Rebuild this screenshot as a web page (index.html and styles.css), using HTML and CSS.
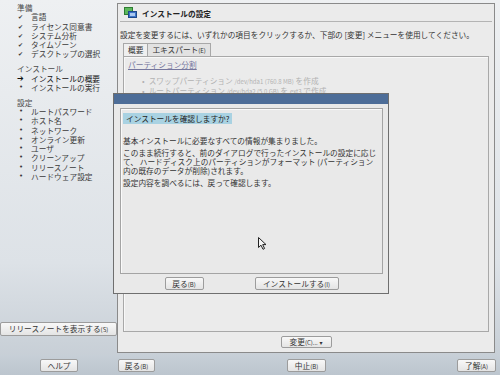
FILE: index.html
```html
<!DOCTYPE html>
<html lang="ja">

<head>
    <meta charset="UTF-8">
    <meta name="viewport" content="width=device-width, initial-scale=1.0">
    <title>インストールの設定</title>

    <link rel="stylesheet" href="styles.css">
</head>

<body>
    <div class="screen">
        <div class="top">
            <!-- 左側：インストール手順 -->
            <aside class="side">
                <ul class="steps">
                    <li class="head">準備</li>
                    <li class="done">言語</li>
                    <li class="done">ライセンス同意書</li>
                    <li class="done">システム分析</li>
                    <li class="done">タイムゾーン</li>
                    <li class="done">デスクトップの選択</li>
                    <li class="head gap">インストール</li>
                    <li class="cur">インストールの概要</li>
                    <li class="todo">インストールの実行</li>
                    <li class="head gap">設定</li>
                    <li class="todo">ルートパスワード</li>
                    <li class="todo">ホスト名</li>
                    <li class="todo">ネットワーク</li>
                    <li class="todo">オンライン更新</li>
                    <li class="todo">ユーザ</li>
                    <li class="todo">クリーンアップ</li>
                    <li class="todo">リリースノート</li>
                    <li class="todo">ハードウェア設定</li>
                </ul>
                <button class="btn relnotes">リリースノートを表示する<small>(S)</small></button>
            </aside>

            <!-- 右側：設定パネル -->
            <section class="panel">
                <div class="panel-title">
                    <svg class="title-icon" width="13" height="12" viewBox="0 0 13 12">
                        <rect x="0.5" y="0.5" width="8" height="7" fill="#5cb85c" stroke="#2e7d32"/>
                        <rect x="4.5" y="4.5" width="8" height="6" fill="#3d74c9" stroke="#1f4a8a"/>
                        <rect x="6" y="6" width="5" height="3" fill="#a9c8f0"/>
                    </svg>
                    <span>インストールの設定</span>
                </div>
                <p class="hint">設定を変更するには、いずれかの項目をクリックするか、下部の [変更] メニューを使用してください。</p>
                <div class="tabs">
                    <span class="tab on">概要</span>
                    <span class="tab">エキスパート<small>(E)</small></span>
                </div>
                <div class="page">
                    <a class="link">パーティション分割</a>
                    <ul class="items">
                        <li>スワップパーティション <small>/dev/hda1 (760.8 MB)</small> を作成</li>
                        <li>ルートパーティション <small>/dev/hda2 (5.0 GB)</small> を <small>ext3</small> で作成</li>
                        <li>ファイルシステム <small>reiser</small> を使用</li>
                    </ul>
                </div>
                <div class="panel-foot">
                    <button class="btn">変更<small>(C)...</small> <span class="arrow">▾</span></button>
                </div>
            </section>
        </div>

        <!-- 下部ボタン -->
        <div class="bottom">
            <button class="btn help">ヘルプ</button>
            <button class="btn back">戻る<small>(B)</small></button>
            <button class="btn abort">中止<small>(B)</small></button>
            <button class="btn ok">了解<small>(A)</small></button>
        </div>

        <!-- 確認ダイアログ（パネルの上に重なる） -->
        <div class="dialog">
            <div class="dialog-bar"></div>
            <div class="dialog-body">
                <div class="frame">
                    <span class="ask">インストールを確認しますか?</span>
                    <p>基本インストールに必要なすべての情報が集まりました。</p>
                    <p>このまま続行すると、前のダイアログで行ったインストールの設定に応じ<br>て、 ハードディスク上のパーティションがフォーマット (パーティション<br>内の既存のデータが削除)されます。</p>
                    <p>設定内容を調べるには、戻って確認します。</p>
                </div>
                <div class="dialog-btns">
                    <button class="btn d-back">戻る<small>(B)</small></button>
                    <button class="btn d-inst">インストールする<small>(I)</small></button>
                </div>
            </div>
        </div>

        <svg class="cursor" width="9" height="13" viewBox="0 0 9 13">
            <path d="M0.5 0.5 L0.5 10.5 L3 8.2 L5 12.3 L6.6 11.5 L4.7 7.6 L8 7.6 Z" fill="#f4f4f4" stroke="#222" stroke-width="1"/>
        </svg>
    </div>
</body>

</html>
```

FILE: styles.css
```css
* {
    box-sizing: border-box;
}

body,
ul,
li,
p {
    margin: 0;
    padding: 0;
    list-style: none;
}

body {
    width: 500px;
    height: 375px;
    overflow: hidden;
    font-family: "Noto Sans CJK JP", "Noto Sans", sans-serif;
    font-size: 7.7px;
    color: #333;
}

small {
    font-size: 6px;
}

.screen {
    position: relative;    /* ダイアログとカーソルの基準 */
    width: 500px;
    height: 375px;
    display: flex;
    flex-direction: column;
    background: linear-gradient(to bottom, #eef0f2, #dde2e7 70%, #c3cbd3);
}

.top {
    display: flex;
    height: 355px;
}

/* ---------- 左側の手順リスト ---------- */
.side {
    width: 117px;
    display: flex;
    flex-direction: column;
    justify-content: space-between;
    padding: 3px 0 19px;
}

.steps li {
    display: flex;
    line-height: 9.3px;
    padding-left: 31px;
    position: relative;
    color: #3a3a3a;
}

.steps .head {
    padding-left: 17px;
    color: #4a4a4a;
}

.steps .gap {
    margin-top: 5.5px;
}

.steps .done::before,
.steps .cur::before,
.steps .todo::before {
    position: absolute;
    left: 18px;
    font-family: "DejaVu Sans", sans-serif;
}

.steps .done::before {
    content: "\2714";
    font-size: 6px;
}

.steps .cur {
    color: #111;
}

.steps .cur::before {
    content: "\2794";
    font-size: 8px;
    left: 17px;
}

.steps .todo::before {
    content: "\2022";
    font-size: 7px;
    left: 19px;
}

/* ---------- ボタン共通 ---------- */
.btn {
    font: inherit;
    color: #333;
    height: 13px;
    padding: 0 4px;
    line-height: 11px;
    border: 1px solid #9c9c9c;
    border-radius: 2px;
    background: linear-gradient(to bottom, #f8f8f8, #e4e4e4);
}

.relnotes {
    width: 117px;
    height: 14px;
}

/* ---------- 右側のパネル ---------- */
.panel {
    width: 378px;
    height: 350px;
    margin-top: 3px;
    display: flex;
    flex-direction: column;
    border: 1px solid #8a8a8a;
    background: #ebebeb;
}

.panel-title {
    display: flex;
    align-items: center;
    gap: 5px;
    height: 18px;
    margin: 0 2px;
    padding: 1px 0 0 4px;
    border-bottom: 1px solid #b4b4b4;
    font-weight: bold;
    color: #222;
}

.hint {
    margin: 8px 0 0 2px;
    line-height: 9px;
}

.tabs {
    display: flex;
    margin: 4px 0 0 5px;
    height: 13px;
}

.tab {
    padding: 0 4px;
    line-height: 12px;
    border: 1px solid #a8a8a8;
    border-bottom: none;
    background: #e2e2e2;
}

.tab.on {
    background: #efefef;
    margin-right: -1px;
}

.page {
    flex: 1;
    margin: 0 5px;
    padding: 2px 4px;
    border: 1px solid #a8a8a8;
    box-shadow: inset 1px 1px #f8f8f8;
}

.link {
    color: #76779e;
    text-decoration: underline;
    line-height: 10px;
}

.items {
    margin-top: 7px;
    padding-left: 20px;
    color: #b2b2b2;
}

.items li {
    line-height: 8.7px;
}

.items li::before {
    content: "\2022";
    margin: 0 4px 0 -6px;
}

.panel-foot {
    height: 20px;
    display: flex;
    justify-content: center;
    padding-top: 4px;
}

.panel-foot .btn {
    width: 51px;
    height: 12px;
    line-height: 10px;
}

.arrow {
    font-size: 6px;
    font-family: "DejaVu Sans", sans-serif;
}

/* ---------- 下部ボタン ---------- */
.bottom {
    flex: 1;
    display: flex;
    align-items: center;
    padding-left: 40px;
    background: linear-gradient(to bottom, #c7cfd7, #bcc5ce);
}

.help {
    width: 38px;
}

.back {
    width: 37px;
    margin-left: 40px;
}

.abort {
    width: 39px;
    margin-left: 132px;
}

.ok {
    width: 39px;
    margin-left: 131px;
}

/* ---------- 確認ダイアログ ---------- */
.dialog {
    position: absolute;
    left: 113px;
    top: 93px;
    width: 276px;
    height: 201px;
    display: flex;
    flex-direction: column;
    border: 1px solid #6f6f6f;
    background: #e9e9e9;
}

.dialog-bar {
    height: 10px;
    background: #4d6d98;
}

.dialog-body {
    flex: 1;
    display: flex;
    flex-direction: column;
    padding: 4px 5px 3px 6px;
}

.frame {
    flex: 1;
    padding: 4px 2px;
    border: 1px solid #a4a4a4;
    box-shadow: inset 1px 1px #fafafa;
}

.ask {
    display: inline-block;
    padding: 0 3px;
    line-height: 11px;
    background: #a9d2e2;
    color: #222;
}

.frame p {
    line-height: 9.2px;
    margin-top: 2.5px;
    white-space: nowrap;
}

.frame .ask + p {
    margin-top: 12px;
}

.dialog-btns {
    display: flex;
    justify-content: center;
    gap: 51px;
    padding-top: 3px;
}

.d-back {
    width: 39px;
}

.d-inst {
    width: 84px;
}

.cursor {
    position: absolute;
    left: 258px;
    top: 237px;
}
```
